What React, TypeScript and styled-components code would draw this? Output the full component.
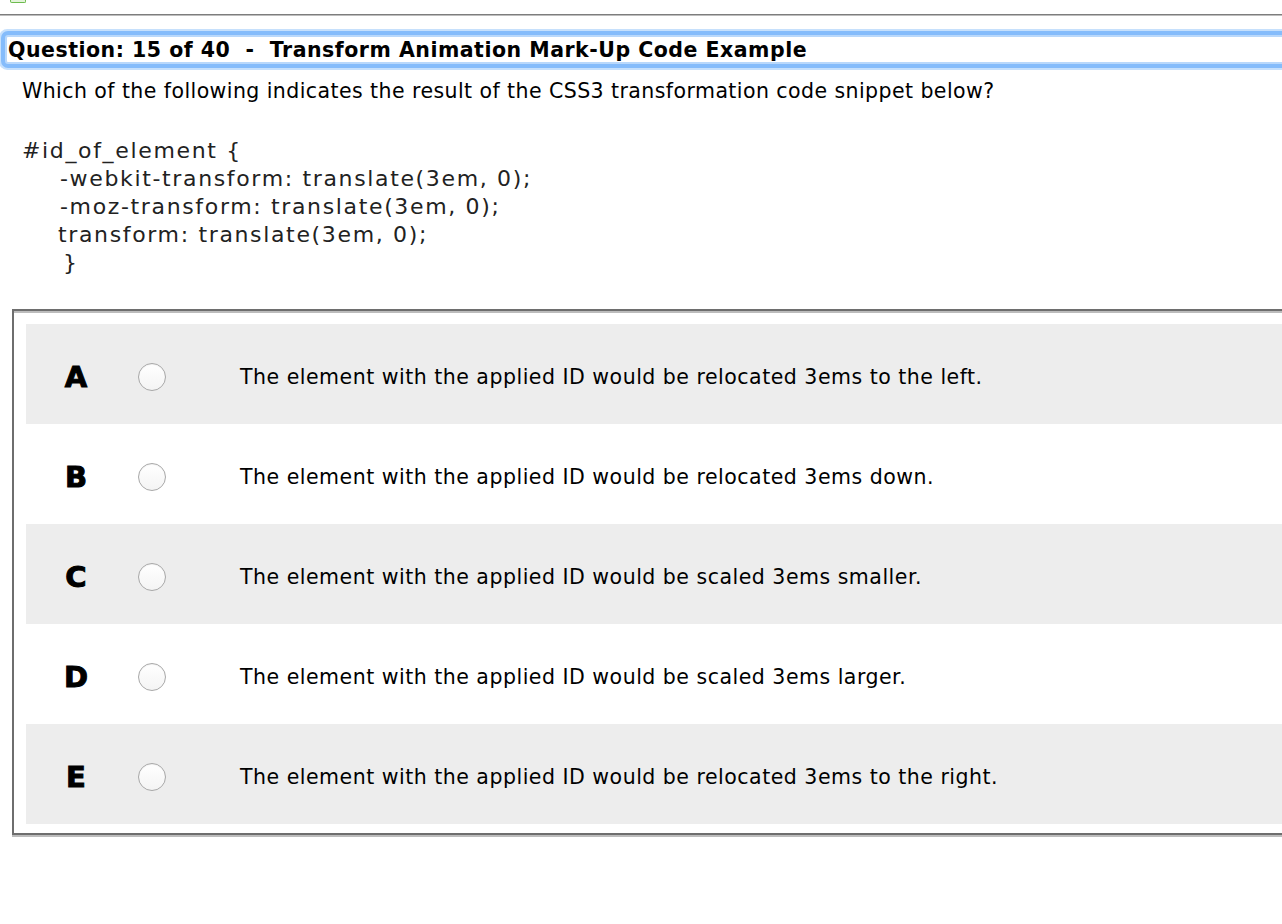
import React from "react";
import styled, { createGlobalStyle } from "styled-components";

const Global = createGlobalStyle`
  html, body {
    margin: 0;
    padding: 0;
    background: #ffffff;
    overflow: hidden;
  }
  body {
    font-family: "DejaVu Sans", Verdana, sans-serif;
    color: #000;
  }
`;

const Page = styled.div`
  width: 1282px;
  height: 924px;
  overflow: hidden;
  display: flex;
  flex-direction: column;
`;

const TopStrip = styled.div`
  height: 14px;
  border-bottom: 1px solid #7d7d7d;
  box-shadow: 0 1px 0 #bdbdbd;
  display: flex;
  align-items: flex-start;
  padding-left: 10px;
`;

const GreenTab = styled.div`
  width: 14px;
  height: 2px;
  border: 1px solid #6dbb4e;
  border-top: none;
  border-radius: 0 0 2px 2px;
  background: #e3f3da;
`;

const HeaderBox = styled.div`
  margin: 20px -20px 0 5px;
  height: 25px;
  line-height: 27px;
  border: 2px solid #b9d8fb;
  border-radius: 3px;
  box-shadow: 0 0 0 4px #85bcfb, 0 0 0 6px #c6e0fc;
  padding-left: 1px;
  font-family: "DejaVu Sans", Verdana, sans-serif;
  font-weight: bold;
  font-size: 20.5px;
  letter-spacing: 0.5px;
  white-space: pre;
  background: #fff;
`;

const Prompt = styled.p`
  margin: 14px 0 0 22px;
  font-size: 20.5px;
  letter-spacing: 0.43px;
  line-height: 26px;
`;

const Code = styled.div`
  margin: 33px 0 0 22px;
  font-family: "DejaVu Sans", sans-serif;
  font-size: 22px;
  letter-spacing: 1.65px;
  line-height: 28px;
  color: #222;
`;

const CodeLine = styled.div<{ $indent: number }>`
  padding-left: ${(p) => p.$indent}px;
  white-space: pre;
`;

const OptionsBox = styled.div`
  margin: 32px -40px 0 12px;
  border: 2px solid #6e6e6e;
  box-shadow: inset 0 2px 0 #bcbcbc, 0 2px 0 #bcbcbc;
  padding: 13px 0 9px 12px;
  display: flex;
  flex-direction: column;
`;

const OptionRow = styled.label<{ $shaded: boolean }>`
  box-sizing: border-box;
  height: 100px;
  padding-top: 5px;
  display: grid;
  grid-template-columns: 100px 114px 1fr;
  align-items: center;
  background: ${(p) => (p.$shaded ? "#ededed" : "#ffffff")};
`;

const Letter = styled.span`
  text-align: center;
  font-family: "DejaVu Sans", "Arial Black", sans-serif;
  font-weight: 900;
  font-size: 29px;
  -webkit-text-stroke: 1px #000;
`;

const Radio = styled.span`
  margin-left: 12px;
  width: 26px;
  height: 26px;
  border-radius: 50%;
  border: 1px solid #a8a8a8;
  background: linear-gradient(#ffffff, #f4f4f4);
  box-shadow: inset 0 1px 1px rgba(0, 0, 0, 0.05);
`;

const OptionText = styled.span`
  font-size: 20.5px;
  letter-spacing: 0.5px;
`;

const options = [
  { letter: "A", text: "The element with the applied ID would be relocated 3ems to the left." },
  { letter: "B", text: "The element with the applied ID would be relocated 3ems down." },
  { letter: "C", text: "The element with the applied ID would be scaled 3ems smaller." },
  { letter: "D", text: "The element with the applied ID would be scaled 3ems larger." },
  { letter: "E", text: "The element with the applied ID would be relocated 3ems to the right." },
];

const codeLines: { text: string; indent: number }[] = [
  { text: "#id_of_element {", indent: 0 },
  { text: "-webkit-transform: translate(3em, 0);", indent: 38 },
  { text: "-moz-transform: translate(3em, 0);", indent: 38 },
  { text: "transform: translate(3em, 0);", indent: 36 },
  { text: "}", indent: 41 },
];

export default function App() {
  return (
    <Page>
      <Global />
      <TopStrip>
        <GreenTab />
      </TopStrip>
      <HeaderBox>{"Question: 15 of 40  -  Transform Animation Mark-Up Code Example"}</HeaderBox>
      <Prompt>Which of the following indicates the result of the CSS3 transformation code snippet below?</Prompt>
      <Code>
        {codeLines.map((l, i) => (
          <CodeLine key={i} $indent={l.indent}>
            {l.text}
          </CodeLine>
        ))}
      </Code>
      <OptionsBox>
        {options.map((o, i) => (
          <OptionRow key={o.letter} $shaded={i % 2 === 0}>
            <Letter>{o.letter}</Letter>
            <Radio />
            <OptionText>{o.text}</OptionText>
          </OptionRow>
        ))}
      </OptionsBox>
    </Page>
  );
}
